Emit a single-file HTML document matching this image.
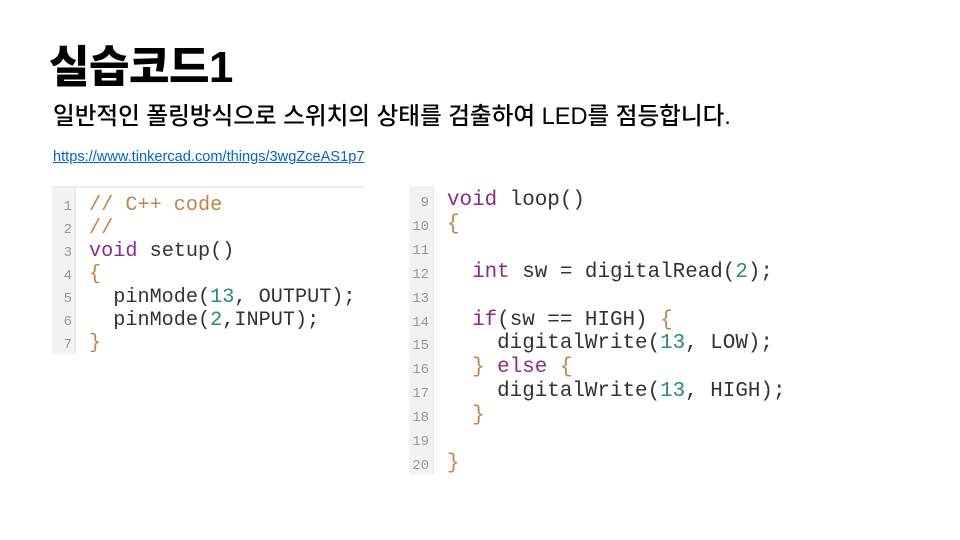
<!DOCTYPE html>
<html><head><meta charset="utf-8"><style>
body{margin:0;width:960px;height:540px;background:#fff;position:relative;overflow:hidden;font-family:"Liberation Sans","Noto Sans CJK KR",sans-serif}
.t{position:absolute;left:49px;top:31px;font-size:44px;font-weight:900;color:#000;letter-spacing:-0.5px}
.s{position:absolute;left:53px;top:97px;font-size:23.6px;font-weight:500;color:#000}
.l{position:absolute;left:53px;top:149px;font-size:14.6px;color:#0563c1;text-decoration:underline}
.code{position:absolute;font-family:"Liberation Mono",monospace;color:#333;white-space:pre}
.g{position:absolute;background:#f2f2f2;border-right:1px solid #e4e4e4}
.n{position:absolute;font-family:"Liberation Mono",monospace;font-size:14px;color:#999;text-align:right;white-space:pre}
.c{color:#c0834a}.k{color:#8b2a8b}.d{color:#2a8a7a}.b{color:#c0834a}
</style></head><body>
<div class="t">실습코드1</div>
<div class="s">일반적인 폴링방식으로 스위치의 상태를 검출하여 LED를 점등합니다.</div>
<div class="l">https://www.tinkercad.com/things/3wgZceAS1p7</div>

<div style="position:absolute;left:52px;top:186px;width:311px;height:2px;background:#ececec"></div>
<div class="g" style="left:52px;top:188px;width:23px;height:166px"></div>
<div class="n" style="left:52px;top:196px;width:20px;line-height:23px">1
2
3
4
5
6
7</div>
<div class="code" style="left:89px;top:194px;line-height:23px;font-size:20.2px"><span class="c">// C++ code</span>
<span class="c">//</span>
<span class="k">void</span> setup()
<span class="b">{</span>
  pinMode(<span class="d">13</span>, OUTPUT);
  pinMode(<span class="d">2</span>,INPUT);
<span class="b">}</span></div>

<div class="g" style="left:409px;top:186px;width:24px;height:288px"></div>
<div class="n" style="left:405px;top:192px;width:24px;line-height:23.9px">9
10
11
12
13
14
15
16
17
18
19
20</div>
<div class="code" style="left:447px;top:189px;line-height:23.9px;font-size:20.9px"><span class="k">void</span> loop()
<span class="b">{</span>

  <span class="k">int</span> sw = digitalRead(<span class="d">2</span>);

  <span class="k">if</span>(sw == HIGH) <span class="b">{</span>
    digitalWrite(<span class="d">13</span>, LOW);
  <span class="b">}</span> <span class="k">else</span> <span class="b">{</span>
    digitalWrite(<span class="d">13</span>, HIGH);
  <span class="b">}</span>

<span class="b">}</span></div>
</body></html>
